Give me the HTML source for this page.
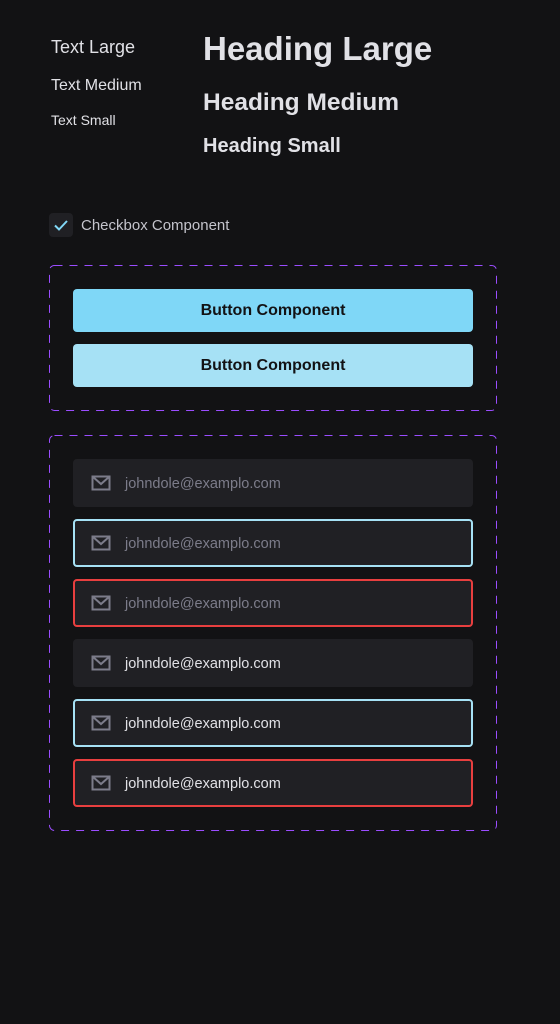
<!DOCTYPE html>
<html><head><style>
body{margin:0;width:560px;height:1024px;background:#121214;font-family:"Liberation Sans",sans-serif;position:relative;overflow:hidden;color:#e1e1e6}
.a{position:absolute;white-space:nowrap}
.btn{position:absolute;left:73px;width:400px;height:43px;border-radius:4px;color:#121214;font-weight:bold;font-size:16px;text-align:center;line-height:43px}
.inp{position:absolute;left:73px;width:400px;height:48px;box-sizing:border-box;border-radius:4px;background:#202024;border:2px solid transparent}
.inp svg{position:absolute;left:16px;top:14px}
.inp span{position:absolute;left:50px;top:1px;line-height:44px;font-size:14.5px}
</style></head><body>
<div class="a" style="left:51px;top:37px;font-size:18px">Text Large</div>
<div class="a" style="left:51px;top:77px;font-size:16px">Text Medium</div>
<div class="a" style="left:51px;top:112px;font-size:14px">Text Small</div>
<div class="a" style="left:203px;top:30px;font-size:33px;font-weight:bold">Heading Large</div>
<div class="a" style="left:203px;top:89px;font-size:24.5px;font-weight:bold">Heading Medium</div>
<div class="a" style="left:203px;top:135px;font-size:20px;font-weight:bold">Heading Small</div>
<div class="a" style="left:49px;top:213px;width:24px;height:24px;border-radius:4px;background:#202024"></div>
<svg class="a" style="left:49px;top:213px" width="24" height="24"><path d="M6 12.5l4 4L18 8" fill="none" stroke="#81d8f7" stroke-width="2"/></svg>
<div class="a" style="left:81px;top:217px;font-size:15px;color:#c4c4cc">Checkbox Component</div>
<svg class="a" style="left:0;top:0" width="560" height="1024">
<rect x="49.5" y="265.5" width="447" height="145" rx="5" fill="none" stroke="#9b4dff" stroke-dasharray="8 7"/>
<rect x="49.5" y="435.5" width="447" height="395" rx="5" fill="none" stroke="#9b4dff" stroke-dasharray="8 7"/>
</svg>
<div class="btn" style="top:289px;background:#7fd7f7">Button Component</div>
<div class="btn" style="top:344px;background:#a6e1f5">Button Component</div>

<div class="inp" style="top:459px"><svg width="20" height="16"><path d="M1.5 1.5h17v13h-17z M1.5 1.5l8.5 7.5 8.5-7.5" fill="none" stroke="#7c7c8a" stroke-width="2"/></svg><span style="color:#7c7c8a">johndole@examplo.com</span></div>
<div class="inp" style="top:519px;border-color:#a6e1f5"><svg width="20" height="16"><path d="M1.5 1.5h17v13h-17z M1.5 1.5l8.5 7.5 8.5-7.5" fill="none" stroke="#7c7c8a" stroke-width="2"/></svg><span style="color:#7c7c8a">johndole@examplo.com</span></div>
<div class="inp" style="top:579px;border-color:#e83f3f"><svg width="20" height="16"><path d="M1.5 1.5h17v13h-17z M1.5 1.5l8.5 7.5 8.5-7.5" fill="none" stroke="#7c7c8a" stroke-width="2"/></svg><span style="color:#7c7c8a">johndole@examplo.com</span></div>
<div class="inp" style="top:639px"><svg width="20" height="16"><path d="M1.5 1.5h17v13h-17z M1.5 1.5l8.5 7.5 8.5-7.5" fill="none" stroke="#7c7c8a" stroke-width="2"/></svg><span style="color:#e1e1e6">johndole@examplo.com</span></div>
<div class="inp" style="top:699px;border-color:#a6e1f5"><svg width="20" height="16"><path d="M1.5 1.5h17v13h-17z M1.5 1.5l8.5 7.5 8.5-7.5" fill="none" stroke="#7c7c8a" stroke-width="2"/></svg><span style="color:#e1e1e6">johndole@examplo.com</span></div>
<div class="inp" style="top:759px;border-color:#e83f3f"><svg width="20" height="16"><path d="M1.5 1.5h17v13h-17z M1.5 1.5l8.5 7.5 8.5-7.5" fill="none" stroke="#7c7c8a" stroke-width="2"/></svg><span style="color:#e1e1e6">johndole@examplo.com</span></div>
</body></html>
